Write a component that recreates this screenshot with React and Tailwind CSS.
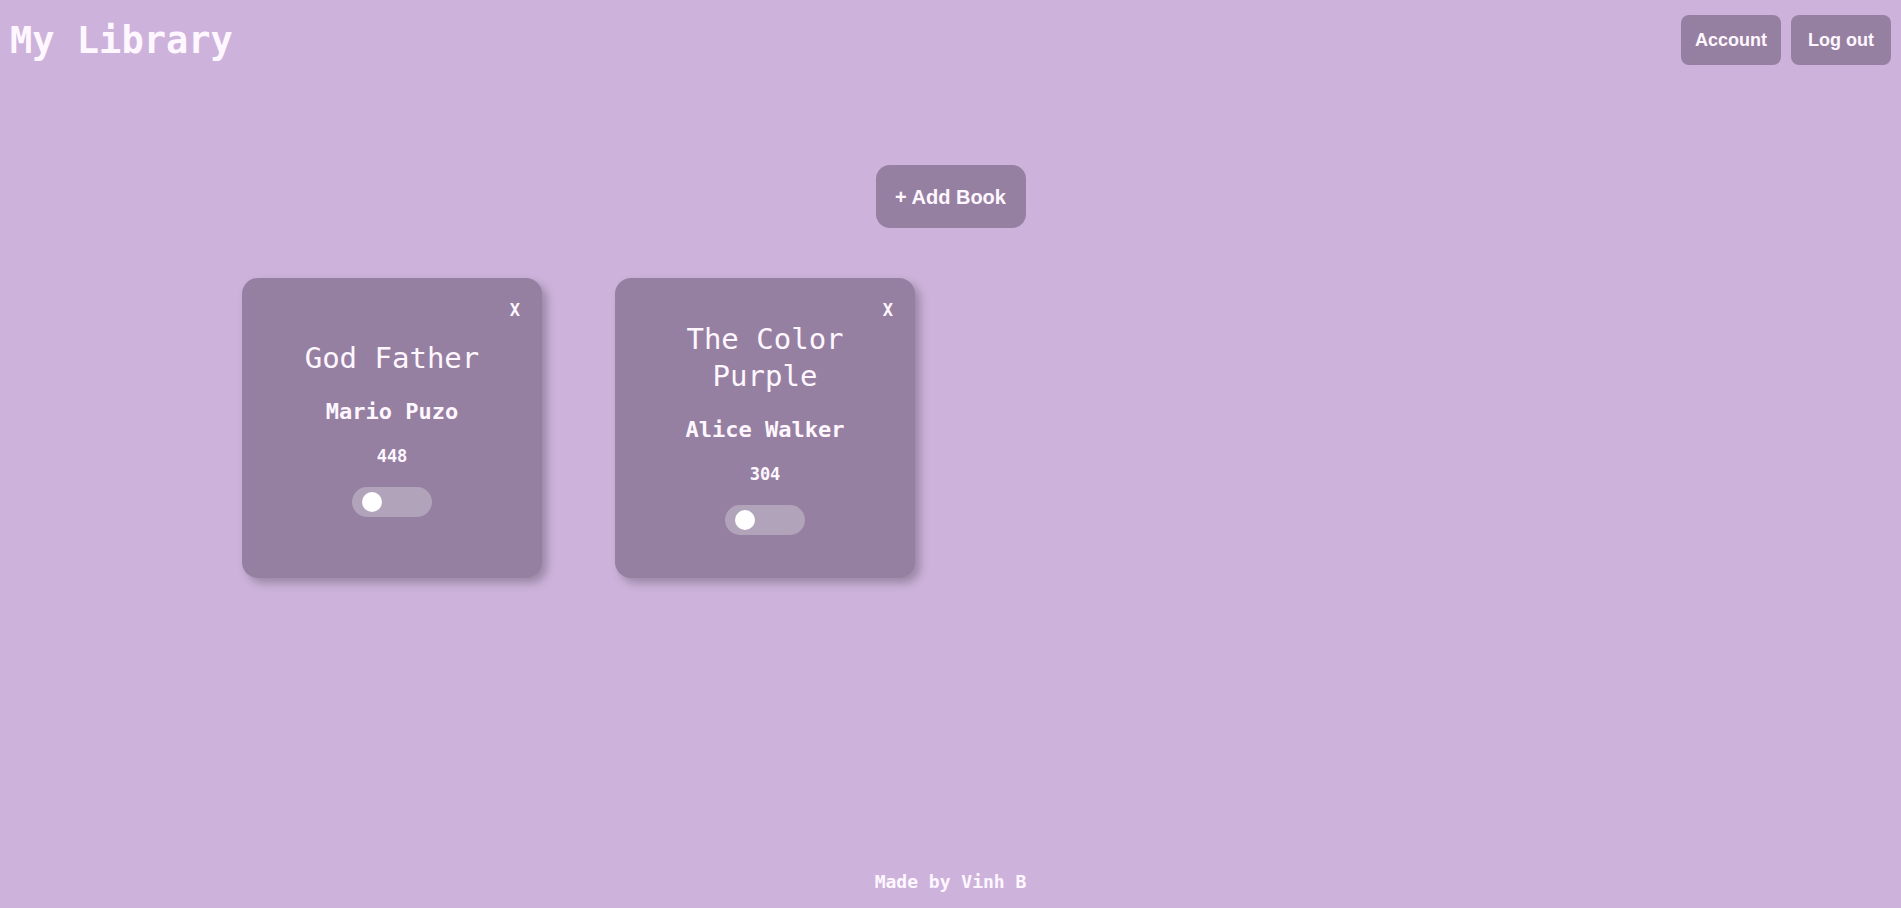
import { useState } from 'react';

const mono = 'font-["DejaVu_Sans_Mono",monospace]';
const sans = 'font-["Liberation_Sans",Arial,sans-serif]';

function Toggle({ on, onClick }) {
  return (
    <button
      onClick={onClick}
      className={`w-[80px] h-[30px] rounded-full bg-[#b1a3b9] flex items-center px-[10px] ${on ? 'justify-end' : 'justify-start'}`}
    >
      <span className="block w-[20px] h-[20px] rounded-full bg-white"></span>
    </button>
  );
}

function BookCard({ book, onToggle }) {
  return (
    <div className="relative w-[300px] h-[300px] rounded-[16px] bg-[#9680a1] shadow-[5px_5px_10px_rgba(0,0,0,0.25)] flex flex-col items-center justify-center text-[#fff7ff] text-center px-8">
      <button className={`absolute top-[20px] right-[22px] text-[17px] font-bold ${mono}`}>X</button>
      <h2 className="text-[29px] leading-[37px] mb-[22px]">{book.title}</h2>
      <h3 className="text-[22px] leading-[26px] font-bold mb-[21px]">{book.author}</h3>
      <p className="text-[17px] leading-[20px] font-bold mb-[21px]">{book.pages}</p>
      <Toggle on={book.read} onClick={onToggle} />
    </div>
  );
}

export default function App() {
  const [books, setBooks] = useState([
    { title: 'God Father', author: 'Mario Puzo', pages: 448, read: false },
    { title: 'The Color Purple', author: 'Alice Walker', pages: 304, read: false },
  ]);

  const toggle = (i) =>
    setBooks(books.map((b, j) => (j === i ? { ...b, read: !b.read } : b)));

  return (
    <div className={`min-h-[908px] bg-[#cdb3db] text-[#fff7ff] flex flex-col ${mono}`}>
      <header className="flex items-start justify-between pl-[10px] pr-[10px] pt-[15px]">
        <h1 className="text-[37px] leading-[50px] font-bold mt-[1px]">My Library</h1>
        <div className={`flex gap-[10px] ${sans}`}>
          <button className="w-[100px] h-[50px] pt-[1px] rounded-[8px] bg-[#9680a1] text-[18px] font-bold">Account</button>
          <button className="w-[100px] h-[50px] pt-[1px] rounded-[8px] bg-[#9680a1] text-[18px] font-bold">Log out</button>
        </div>
      </header>

      <div className="flex justify-center mt-[99px]">
        <button className={`w-[150px] h-[63px] rounded-[14px] bg-[#9680a1] text-[20px] font-bold ${sans}`}>
          + Add Book
        </button>
      </div>

      <div className="flex gap-[73px] pl-[242px] mt-[50px]">
        {books.map((b, i) => (
          <BookCard key={i} book={b} onToggle={() => toggle(i)} />
        ))}
      </div>

      <footer className="mt-auto pb-[15px] text-center text-[18px] font-bold leading-[22px]">
        Made by Vinh B
      </footer>
    </div>
  );
}
